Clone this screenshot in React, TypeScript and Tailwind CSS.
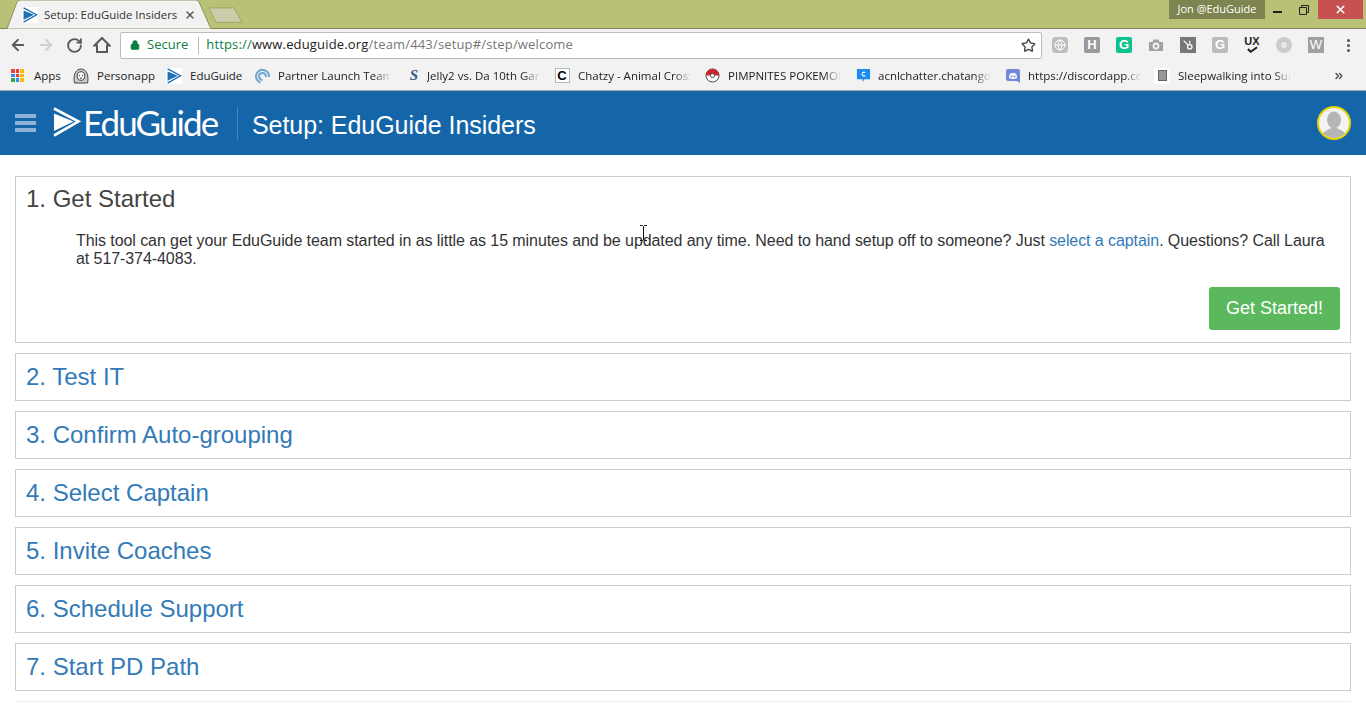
import React from "react";
import { ArrowLeft, ArrowRight, RotateCw, Star, Lock, X, ChevronsRight, Globe } from "lucide-react";

const ui = "font-['Open_Sans','Noto_Sans',sans-serif]";

function EduMark({ className, color = "#1f6fb5" }: { className?: string; color?: string }) {
  return (
    <svg viewBox="0 0 28 30" className={className}>
      <path d="M1 1.5 L25.5 14.5 L1 28.5" fill="none" stroke={color} strokeWidth="2.6" />
      <path d="M1 6.5 L20.5 14.5 L1 24 Z" fill={color} />
    </svg>
  );
}

function Tab() {
  return (
    <div className="relative ml-[7px] flex h-[29px] w-[204px] items-center pl-[15px]">
      <svg viewBox="0 0 204 29" className="absolute inset-0 h-full w-full">
        <path d="M0 29 L10 2 Q11 0 14 0 L189 0 Q191 0 192 2 L204 29 Z" fill="#f2f2f2" stroke="#6f7440" strokeWidth="0.7" />
      </svg>
      <span className="relative flex h-[16px] w-[16px] items-center justify-center bg-white">
        <EduMark className="h-[16px] w-[15px]" />
      </span>
      <span className={`relative ml-[6px] text-[11.4px] text-[#333] whitespace-nowrap ${ui}`}>Setup: EduGuide Insiders</span>
      <X className="relative ml-[7px] h-[12px] w-[12px] text-[#555]" strokeWidth={2.8} />
    </div>
  );
}

function ChromeTop() {
  return (
    <div className="flex h-[29px] items-start justify-between border-b border-[#7f8450] bg-[#b9c176]">
      <div className="flex items-start">
        <Tab />
        <svg viewBox="0 0 36 20" className="ml-[-3px] mt-[7px] h-[18px] w-[36px]" preserveAspectRatio="none">
          <path d="M1 1 L26 1 L34 17 L8 17 Z" fill="#cbcdaa" stroke="#9da268" strokeWidth="1" strokeLinejoin="round" />
        </svg>
      </div>
      <div className="flex items-start">
        <div className={`flex h-[19px] w-[96px] items-center justify-center bg-[#7e8450] text-[11px] text-white ${ui}`}>Jon @EduGuide</div>
        <div className="flex h-[19px] w-[53px] items-center justify-between pl-[8px] pr-[9px]">
          <span className="mt-[4px] h-[2px] w-[9px] bg-[#222]" />
          <svg viewBox="0 0 10 10" className="h-[10px] w-[10px]">
            <path d="M0.5 2.5h7v7h-7z M2.5 2.5v-2h7v7h-2" fill="none" stroke="#222" />
          </svg>
        </div>
        <div className="flex h-[19px] w-[45px] items-center justify-center bg-[#c75050]">
          <X className="h-[13px] w-[13px] text-white" strokeWidth={3} />
        </div>
        <div className="w-[3px]" />
      </div>
    </div>
  );
}

function ExtIcon({ children, className = "" }: { children?: React.ReactNode; className?: string }) {
  return (
    <div className="flex h-[32px] w-[32px] items-center justify-center">
      <div className={`flex h-[16px] w-[16px] items-center justify-center text-[13px] font-bold text-white font-['Liberation_Sans',sans-serif] ${className}`}>{children}</div>
    </div>
  );
}

function Toolbar() {
  return (
    <div className="flex h-[32px] items-center bg-[#f2f2f2]">
      <div className="flex w-[120px] items-center pl-[4px]">
        <div className="flex w-[28px] justify-center"><ArrowLeft className="h-[18px] w-[18px] text-[#5a5a5a]" strokeWidth={2.4} /></div>
        <div className="flex w-[28px] justify-center"><ArrowRight className="h-[18px] w-[18px] text-[#cfcfcf]" strokeWidth={2.4} /></div>
        <div className="flex w-[28px] justify-center"><RotateCw className="h-[17px] w-[17px] text-[#5a5a5a]" strokeWidth={2.6} /></div>
        <div className="flex w-[28px] justify-center">
          <svg viewBox="0 0 18 18" className="h-[18px] w-[18px]">
            <path d="M1.5 9.5 L9 2 L16.5 9.5 H14 V16 H4 V9.5 Z" fill="none" stroke="#5a5a5a" strokeWidth="2" strokeLinejoin="miter" />
          </svg>
        </div>
      </div>
      <div className="flex h-[27px] w-[922px] items-center rounded-[2px] border border-[#bdbdbd] bg-white pl-[9px] pr-[5px]">
        <Lock className="h-[10px] w-[10px] fill-[#0b8043] text-[#0b8043]" strokeWidth={2.5} />
        <span className={`ml-[7px] text-[13px] text-[#0b8043] ${ui}`}>Secure</span>
        <span className="ml-[10px] h-[17px] w-px bg-[#bbb]" />
        <span className={`ml-[7px] text-[13px] tracking-[0.16px] whitespace-nowrap text-[#777] ${ui}`}>
          <span className="text-[#0b8043]">https://</span>
          <span className="text-[#222]">www.eduguide.org</span>/team/443/setup#/step/welcome
        </span>
        <Star className="ml-auto h-[15px] w-[15px] text-[#444]" strokeWidth={2.2} />
      </div>
      <div className="ml-[2px] flex items-center">
        <ExtIcon className="rounded-[4px] bg-[#bdbdbd]"><Globe className="h-[12px] w-[12px]" strokeWidth={2} /></ExtIcon>
        <ExtIcon className="rounded-[2px] bg-[#9a9a9a]">H</ExtIcon>
        <ExtIcon className="rounded-[2px] bg-[#0cc28f]">G</ExtIcon>
        <ExtIcon>
          <svg viewBox="0 0 16 16" className="h-[16px] w-[16px]">
            <path d="M1 5h3.500l1-2.500h5l1 2.500H15v9H1z" fill="#a3a3a3" />
            <circle cx="8" cy="9" r="3.400" fill="#f2f2f2" />
            <circle cx="8" cy="9" r="1.600" fill="#a3a3a3" />
          </svg>
        </ExtIcon>
        <ExtIcon className="bg-[#777]">
          <svg viewBox="0 0 16 16" className="h-[14px] w-[14px]"><circle cx="10" cy="10" r="2.500" fill="none" stroke="#fff" strokeWidth="1.500" /><path d="M3 3l5 5M10 3v4" stroke="#fff" strokeWidth="1.300" /></svg>
        </ExtIcon>
        <ExtIcon className="rounded-[2px] bg-[#bbb]">G</ExtIcon>
        <ExtIcon className="!text-[#222]">
          <div className="flex flex-col items-center leading-[9px]">
            <span className="text-[11px] font-bold">UX</span>
            <svg viewBox="0 0 12 7" className="h-[7px] w-[11px]"><path d="M1 3l3 3 7-5" fill="none" stroke="#222" strokeWidth="2.200" /></svg>
          </div>
        </ExtIcon>
        <ExtIcon className="rounded-full bg-[#cbcbcb]"><span className="h-[6px] w-[6px] rounded-full bg-[#e8e8e8]" /></ExtIcon>
        <ExtIcon className="bg-[#a0a0a0] font-normal">W</ExtIcon>
        <div className="flex h-[32px] w-[32px] flex-col items-center justify-center gap-[2px]">
          <span className="h-[3px] w-[3px] rounded-full bg-[#555]" />
          <span className="h-[3px] w-[3px] rounded-full bg-[#555]" />
          <span className="h-[3px] w-[3px] rounded-full bg-[#555]" />
        </div>
      </div>
    </div>
  );
}

function Bookmark({ icon, label, width, fade = true, gap = "ml-[8px]" }: { icon: React.ReactNode; label: string; width: string; fade?: boolean; gap?: string }) {
  return (
    <div className={`flex items-center ${width}`}>
      <div className="flex h-[16px] w-[16px] shrink-0 items-center justify-center">{icon}</div>
      <span className={`${gap} overflow-hidden whitespace-nowrap text-[11.5px] text-[#222] ${ui} ${fade ? "w-[113px] [mask-image:linear-gradient(to_right,black_85%,transparent)]" : ""}`}>{label}</span>
    </div>
  );
}

function Bookmarks() {
  const dots = ["#ea4335", "#ea4335", "#fbbc05", "#4285f4", "#ea4335", "#fbbc05", "#34a853", "#4285f4", "#fbbc05"];
  return (
    <div className="flex h-[30px] items-center justify-between border-b border-[#a9a9a9] bg-[#f2f2f2] pl-[11px]">
      <div className="flex items-center">
        <div className="flex w-[62px] items-center">
          <div className="grid h-[13px] w-[13px] grid-cols-3 gap-[1px]">
            {dots.map((c, i) => <span key={i} style={{ backgroundColor: c }} />)}
          </div>
          <span className={`ml-[10px] text-[11.5px] text-[#222] ${ui}`}>Apps</span>
        </div>
        <Bookmark width="w-[93px]" fade={false} label="Personapp" icon={
          <svg viewBox="0 0 16 16" className="h-[16px] w-[16px]">
            <path d="M1.500 15C0 9 2 1 8 1s8 8 6.500 14z" fill="#ccc" stroke="#444" />
            <ellipse cx="8" cy="8" rx="3.800" ry="4.300" fill="#f5f5f5" stroke="#444" />
            <path d="M6 7.500h1M9 7.500h1M7 10.200h2" stroke="#444" />
          </svg>
        } />
        <Bookmark width="w-[89px]" fade={false} label="EduGuide" icon={
          <span className="flex h-[16px] w-[16px] items-center justify-center bg-white"><EduMark className="h-[16px] w-[15px]" /></span>
        } />
        <Bookmark width="w-[151px]" gap="ml-[7px]" label="Partner Launch Team" icon={
          <svg viewBox="0 0 16 16" className="h-[16px] w-[16px]"><path d="M5.500 14.500A6.500 6.500 0 1 1 14 9" fill="none" stroke="#6aa6cf" strokeWidth="2" /><path d="M7.500 12a3.500 3.500 0 1 1 3.500-3" fill="none" stroke="#6aa6cf" strokeWidth="2" /></svg>
        } />
        <Bookmark width="w-[148px]" gap="ml-[5px]" label="Jelly2 vs. Da 10th Game" icon={<span className="font-['Liberation_Serif',serif] text-[15px] font-bold italic text-[#2a5d8a]">S</span>} />
        <Bookmark width="w-[150px]" label="Chatzy - Animal Crossing" icon={
          <span className="flex h-[15px] w-[15px] items-center justify-center border border-[#a9c4a9] bg-white font-['Liberation_Sans',sans-serif] text-[13px] font-bold leading-none text-black">C</span>
        } />
        <Bookmark width="w-[151px]" label="PIMPNITES POKEMON" icon={
          <svg viewBox="0 0 16 16" className="h-[15px] w-[15px]"><circle cx="8" cy="8" r="7" fill="#fff" stroke="#444" /><path d="M1 8a7 7 0 0 1 14 0z" fill="#d3222a" /><circle cx="8" cy="8" r="2.200" fill="#fff" stroke="#444" /></svg>
        } />
        <Bookmark width="w-[150px]" gap="ml-[7px]" label="acnlchatter.chatango" icon={
          <svg viewBox="0 0 16 16" className="h-[15px] w-[15px]">
            <path d="M1 1h14v11H9l-2 3v-3H1z" fill="#1b8bf0" />
            <path d="M9.800 5a2 2 0 1 0 0 3" fill="none" stroke="#fff" strokeWidth="1.200" />
          </svg>
        } />
        <Bookmark width="w-[149px]" gap="ml-[7px]" label="https://discordapp.com" icon={
          <svg viewBox="0 0 16 16" className="h-[16px] w-[16px]"><path d="M3 1h10a2 2 0 0 1 2 2v12l-3-2H3a2 2 0 0 1-2-2V3a2 2 0 0 1 2-2z" fill="#7289da" /><path d="M4 10c0-2 .6-4 1.500-4.600 1.800-.6 3.200-.6 5 0C11.400 6 12 8 12 10c-2.500 1.200-5.500 1.200-8 0z" fill="#fff" /><circle cx="6.500" cy="8.500" r="1" fill="#7289da" /><circle cx="9.500" cy="8.500" r="1" fill="#7289da" /></svg>
        } />
        <Bookmark width="w-[150px]" label="Sleepwalking into Surgery" icon={
          <span className="flex h-[16px] w-[16px] items-center justify-center bg-white"><span className="h-[11px] w-[9px] border border-[#666] bg-[#999]" /></span>
        } />
      </div>
      <ChevronsRight className="mr-[21px] h-[12px] w-[12px] text-[#444]" strokeWidth={2.5} />
    </div>
  );
}

function Header() {
  return (
    <header className="flex h-[64px] items-center bg-[#1565a9] pl-[15px] pr-[15px]">
      <div className="mb-[1px] flex w-[21px] flex-col gap-[3px]">
        <span className="h-[4px] bg-[#8db3d6]" />
        <span className="h-[4px] bg-[#8db3d6]" />
        <span className="h-[4px] bg-[#8db3d6]" />
      </div>
      <EduMark className="mb-[3px] ml-[17px] h-[30px] w-[28px]" color="#ffffff" />
      <span className="mb-[2px] ml-[2px] w-[154px] font-['Lato',sans-serif] text-[35px] leading-none font-normal tracking-[-1.9px] text-white">EduGuide</span>
      <span className="h-[33px] w-px bg-[#4a86bb]" />
      <h1 className="ml-[14px] mt-[3px] font-['Liberation_Sans',sans-serif] text-[25px] leading-[28px] tracking-[-0.05px] text-white">Setup: EduGuide Insiders</h1>
      <div className="ml-auto flex h-[34px] w-[34px] items-center justify-center overflow-hidden rounded-full border-2 border-[#e6d200] bg-[#f3f3f3]">
        <svg viewBox="0 0 30 30" className="h-[30px] w-[30px]">
          <ellipse cx="15" cy="12" rx="7" ry="8.500" fill="#b5b5b5" />
          <path d="M2 30c1-7 7-8 10-10h6c3 2 9 3 10 10z" fill="#b5b5b5" />
        </svg>
      </div>
    </header>
  );
}

const steps = ["2. Test IT", "3. Confirm Auto-grouping", "4. Select Captain", "5. Invite Coaches", "6. Schedule Support", "7. Start PD Path"];

function Content() {
  return (
    <main className="flex flex-col gap-[10px] px-[15px] pt-[21px] font-['Liberation_Sans',sans-serif]">
      <section className="h-[167px] border border-[#cccccc] px-[10px]">
        <h2 className="mt-[8px] text-[24px] leading-[28px] text-[#444]">1. Get Started</h2>
        <p className="mt-[19px] pl-[50px] pr-[6px] text-[16px] leading-[18px] tracking-[-0.075px] text-[#333]">
          This tool can get your EduGuide team started in as little as 15 minutes and be updated any time. Need to hand setup off to someone? Just <span className="text-[#337ab7]">select a captain</span>. Questions? Call Laura at 517-374-4083.
        </p>
        <div className="mt-[19px] flex justify-end">
          <button className="h-[43px] w-[131px] rounded-[3px] bg-[#5cb85c] text-[18px] text-white">Get Started!</button>
        </div>
      </section>
      {steps.map((s) => (
        <section key={s} className="flex h-[48px] items-center border border-[#cccccc] px-[10px]">
          <h2 className="text-[24px] leading-[28px] text-[#337ab7]">{s}</h2>
        </section>
      ))}
      <div className="h-px bg-[#eeeeee]" />
    </main>
  );
}

export default function App() {
  return (
    <div className="relative h-[728px] w-[1366px] overflow-hidden bg-white">
      <ChromeTop />
      <Toolbar />
      <Bookmarks />
      <Header />
      <Content />
      <svg viewBox="0 0 7 16" className="absolute left-[640px] top-[225px] h-[16px] w-[7px]">
        <path d="M0 .5h2.500L3.500 1.500 4.500.5H7M3.500 1.500v13M0 15.500h2.500l1-1 1 1H7" fill="none" stroke="#111" strokeWidth="1" />
      </svg>
    </div>
  );
}
